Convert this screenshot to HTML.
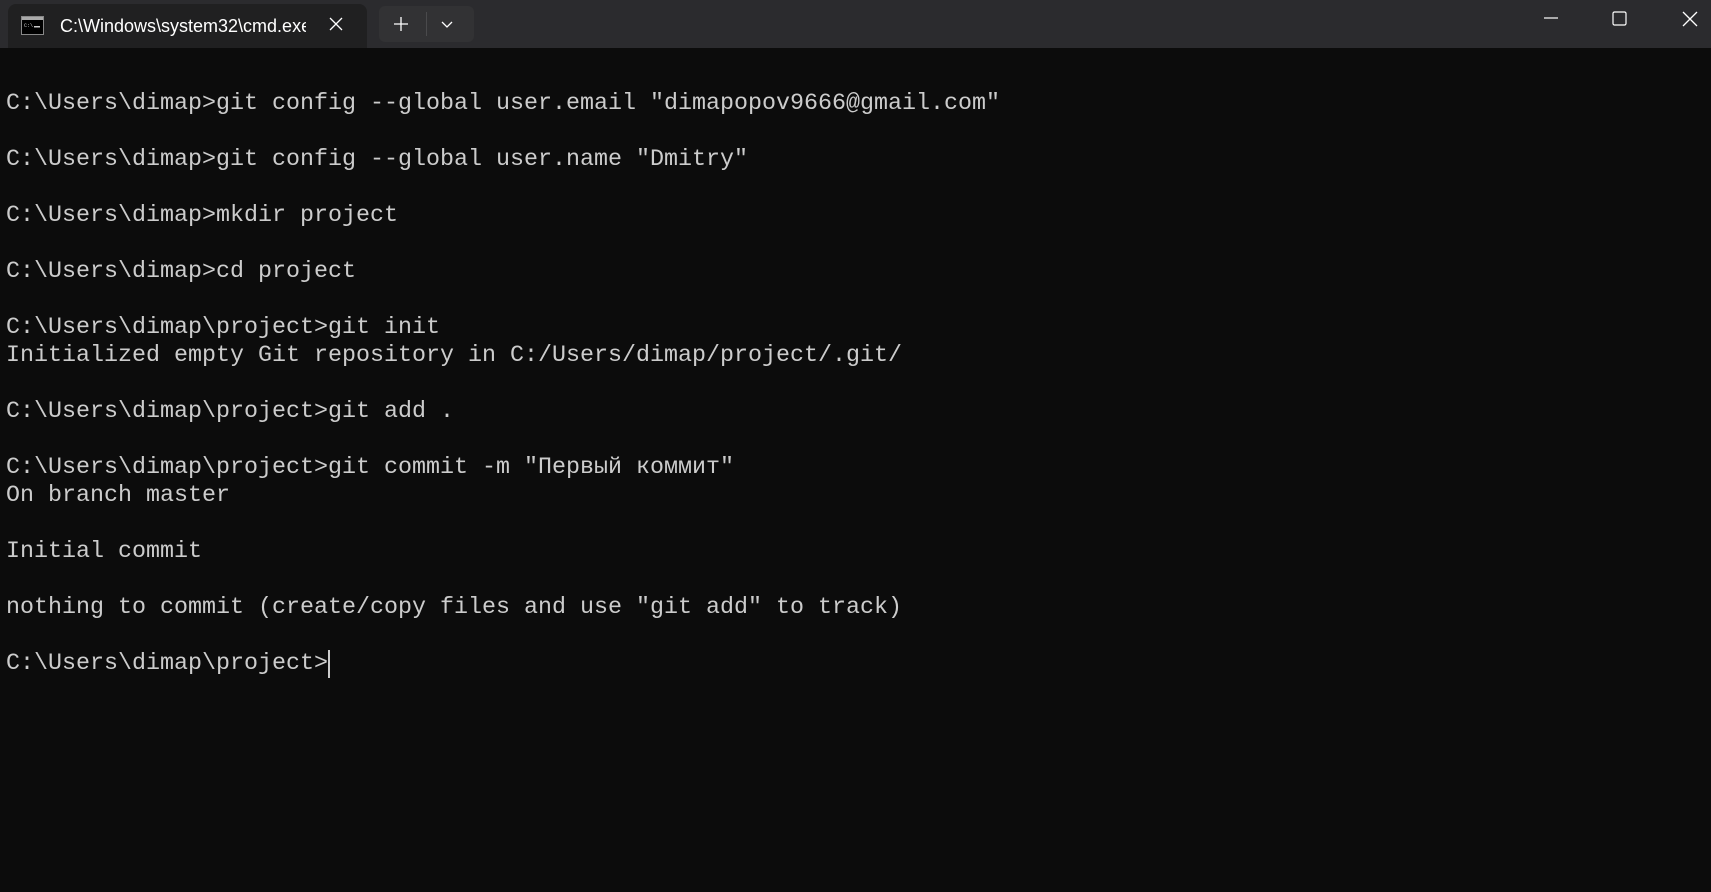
<!DOCTYPE html>
<html><head><meta charset="utf-8"><style>
html,body{margin:0;padding:0;width:1711px;height:892px;background:#0c0c0c;overflow:hidden}
.bar{position:absolute;left:0;top:0;width:1711px;height:48px;background:#2b2b2e}
.tab{position:absolute;left:8px;top:4px;width:359px;height:44px;background:#202021;border-radius:8px 8px 0 0}
.tab .t{position:absolute;left:52px;top:12px;font:18px "Liberation Sans",sans-serif;color:#fff;white-space:nowrap;width:246px;overflow:hidden}
.btns{position:absolute;left:379px;top:6px;width:95px;height:36px;background:#323234;border-radius:6px}
pre{position:absolute;left:6px;top:62px;margin:0;font:23.33px/28px "Liberation Mono","DejaVu Sans Mono",monospace;color:#cccccc}
.cur{display:inline-block;width:2px;height:28px;background:#ccc;vertical-align:top}
</style></head><body>
<div class="bar">
<div class="tab">
<svg style="position:absolute;left:13px;top:12px" width="23" height="19"><rect x="0.5" y="0.5" width="22" height="18" fill="#000" stroke="#888"/><rect x="1" y="1" width="21" height="3" fill="#aaa"/><text x="3" y="11" font-size="5" fill="#ccc" font-family="Liberation Mono">C:\</text><rect x="13" y="10" width="6" height="1.5" fill="#ccc"/></svg>
<div class="t">C:\Windows\system32\cmd.exe</div>
<svg style="position:absolute;left:321px;top:13px" width="14" height="14"><path d="M1 1L13 13M13 1L1 13" stroke="#fff" stroke-width="1.3"/></svg>
</div>
<div class="btns">
<svg style="position:absolute;left:15px;top:11px" width="14" height="14"><path d="M7 0V14M0 7H14" stroke="#fff" stroke-width="1.3"/></svg>
<div style="position:absolute;left:47px;top:6px;width:1px;height:24px;background:#4a4a4c"></div>
<svg style="position:absolute;left:62px;top:15px" width="12" height="8"><path d="M1 1L6 6L11 1" stroke="#fff" stroke-width="1.3" fill="none"/></svg>
</div>
<svg style="position:absolute;left:1544px;top:17px" width="14" height="2"><path d="M0 1H14" stroke="#fff" stroke-width="1.2"/></svg>
<svg style="position:absolute;left:1612px;top:11px" width="15" height="15"><rect x="1" y="1" width="13" height="13" rx="1.5" fill="none" stroke="#fff" stroke-width="1.2"/></svg>
<svg style="position:absolute;left:1682px;top:11px" width="16" height="16"><path d="M1 1L15 15M15 1L1 15" stroke="#fff" stroke-width="1.3"/></svg>
</div>
<pre>

C:\Users\dimap&gt;git config --global user.email "dimapopov9666@gmail.com"

C:\Users\dimap&gt;git config --global user.name "Dmitry"

C:\Users\dimap&gt;mkdir project

C:\Users\dimap&gt;cd project

C:\Users\dimap\project&gt;git init
Initialized empty Git repository in C:/Users/dimap/project/.git/

C:\Users\dimap\project&gt;git add .

C:\Users\dimap\project&gt;git commit -m "Первый коммит"
On branch master

Initial commit

nothing to commit (create/copy files and use "git add" to track)

C:\Users\dimap\project&gt;<span class="cur"></span></pre>
</body></html>
